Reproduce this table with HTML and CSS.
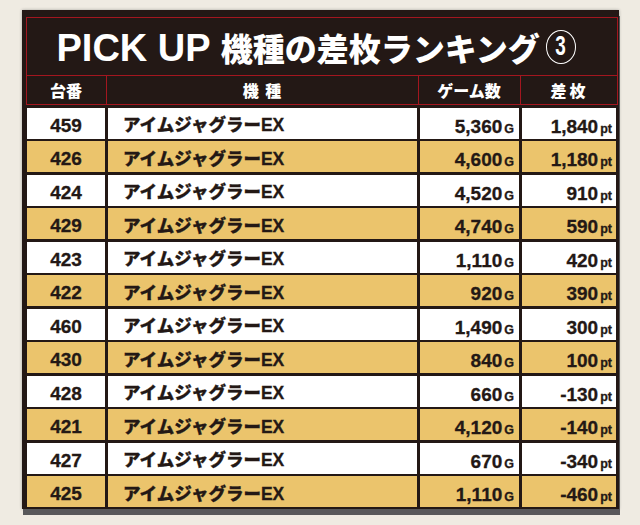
FILE: index.html
```html
<!DOCTYPE html>
<html lang="ja">
<head>
<meta charset="utf-8">
<title>PICK UP 機種の差枚ランキング</title>
<link rel="stylesheet" href="styles.css">
</head>
<body>
<div class="panel">
  <div class="frame">
    <div class="title">
      <span class="lat">PICK UP</span><span class="jp">機種の差枚ランキング</span><span class="circ"><span class="num">3</span></span>
    </div>
    <div class="head">
      <div class="hc">台番</div>
      <div class="hc sp1">機 種</div>
      <div class="hc">ゲーム数</div>
      <div class="hc sp2">差枚</div>
    </div>
  </div>
  <div class="grid">
    <div class="row"><div class="c no">459</div><div class="c nm">アイムジャグラーEX</div><div class="c g">5,360<small>G</small></div><div class="c p">1,840<small>pt</small></div></div>
    <div class="row gold"><div class="c no">426</div><div class="c nm">アイムジャグラーEX</div><div class="c g">4,600<small>G</small></div><div class="c p">1,180<small>pt</small></div></div>
    <div class="row"><div class="c no">424</div><div class="c nm">アイムジャグラーEX</div><div class="c g">4,520<small>G</small></div><div class="c p">910<small>pt</small></div></div>
    <div class="row gold"><div class="c no">429</div><div class="c nm">アイムジャグラーEX</div><div class="c g">4,740<small>G</small></div><div class="c p">590<small>pt</small></div></div>
    <div class="row"><div class="c no">423</div><div class="c nm">アイムジャグラーEX</div><div class="c g">1,110<small>G</small></div><div class="c p">420<small>pt</small></div></div>
    <div class="row gold"><div class="c no">422</div><div class="c nm">アイムジャグラーEX</div><div class="c g">920<small>G</small></div><div class="c p">390<small>pt</small></div></div>
    <div class="row"><div class="c no">460</div><div class="c nm">アイムジャグラーEX</div><div class="c g">1,490<small>G</small></div><div class="c p">300<small>pt</small></div></div>
    <div class="row gold"><div class="c no">430</div><div class="c nm">アイムジャグラーEX</div><div class="c g">840<small>G</small></div><div class="c p">100<small>pt</small></div></div>
    <div class="row"><div class="c no">428</div><div class="c nm">アイムジャグラーEX</div><div class="c g">660<small>G</small></div><div class="c p">-130<small>pt</small></div></div>
    <div class="row gold"><div class="c no">421</div><div class="c nm">アイムジャグラーEX</div><div class="c g">4,120<small>G</small></div><div class="c p">-140<small>pt</small></div></div>
    <div class="row"><div class="c no">427</div><div class="c nm">アイムジャグラーEX</div><div class="c g">670<small>G</small></div><div class="c p">-340<small>pt</small></div></div>
    <div class="row gold"><div class="c no">425</div><div class="c nm">アイムジャグラーEX</div><div class="c g">1,110<small>G</small></div><div class="c p">-460<small>pt</small></div></div>
  </div>
</div>
</body>
</html>
```
FILE: styles.css
```css
html, body {
  margin: 0;
  padding: 0;
}
body {
  background: #efebe2;
  width: 640px;
  height: 525px;
  overflow: hidden;
  font-family: "Liberation Sans", "Noto Sans CJK JP", sans-serif;
  color: #231815;
}
.panel {
  margin: 10px 0 0 22px;
  width: 597px;
  box-sizing: border-box;
  padding: 7px 3px 2px 5px;
  background: #231815;
  box-shadow: 1px 6px 0 #58585a, 0 0 3px rgba(0, 0, 0, 0.3);
}
.frame {
  margin: 0 -1.5px;
  border: 1.5px solid #a3161f;
}
.title {
  height: 57px;
  border-bottom: 1.5px solid #a3161f;
  display: flex;
  align-items: center;
  padding-left: 30px;
  color: #fff;
  font-weight: 700;
}
.lat {
  font-family: "Liberation Sans", sans-serif;
  font-size: 38px;
  line-height: 1;
  position: relative;
  top: 1px;
}
.jp {
  font-family: "Noto Sans CJK JP", sans-serif;
  font-size: 32px;
  font-weight: 900;
  line-height: 1;
  margin-left: 10px;
}
.circ {
  margin-left: 6px;
  width: 30px;
  height: 34px;
  box-sizing: border-box;
  border: 1px solid #fff;
  border-radius: 50%;
  display: inline-flex;
  align-items: center;
  justify-content: center;
}
.circ .num {
  font-family: "Liberation Sans", sans-serif;
  font-size: 27px;
  line-height: 1;
  display: inline-block;
  transform: scaleX(0.7);
}
.head {
  display: grid;
  grid-template-columns: 79px 312px 102px 96px;
  height: 28px;
}
.hc {
  box-sizing: border-box;
  display: flex;
  align-items: center;
  justify-content: center;
  color: #fff;
  font-family: "Noto Sans CJK JP", sans-serif;
  font-weight: 900;
  font-size: 16px;
  line-height: 1;
}
.hc + .hc {
  border-left: 1.5px solid #a3161f;
}
.sp1 {
  word-spacing: 3px;
}
.sp2 {
  letter-spacing: 3px;
  padding-left: 3px;
}
.grid {
  margin-top: 2.5px;
  display: grid;
  grid-template-columns: 78px 309px 99px 94px;
  grid-auto-rows: 31px;
  column-gap: 3px;
  row-gap: 2.5px;
}
.row {
  display: contents;
}
.c {
  background: #ffffff;
  display: flex;
  align-items: center;
  box-sizing: border-box;
  font-weight: 700;
  line-height: 1;
  -webkit-text-stroke: 0.3px #231815;
}
.gold .c {
  background: #ebc46c;
}
.no {
  justify-content: center;
  padding-top: 4px;
  font-size: 19px;
}
.nm {
  padding-left: 15px;
  padding-top: 6px;
  font-size: 17.5px;
  font-weight: 900;
}
.g, .p {
  justify-content: flex-end;
  align-items: baseline;
  padding-top: 9px;
  font-size: 19px;
}
.g {
  padding-right: 5px;
}
.p {
  padding-right: 4px;
}
.c small {
  font-size: 12.5px;
  margin-left: 2px;
}
```
